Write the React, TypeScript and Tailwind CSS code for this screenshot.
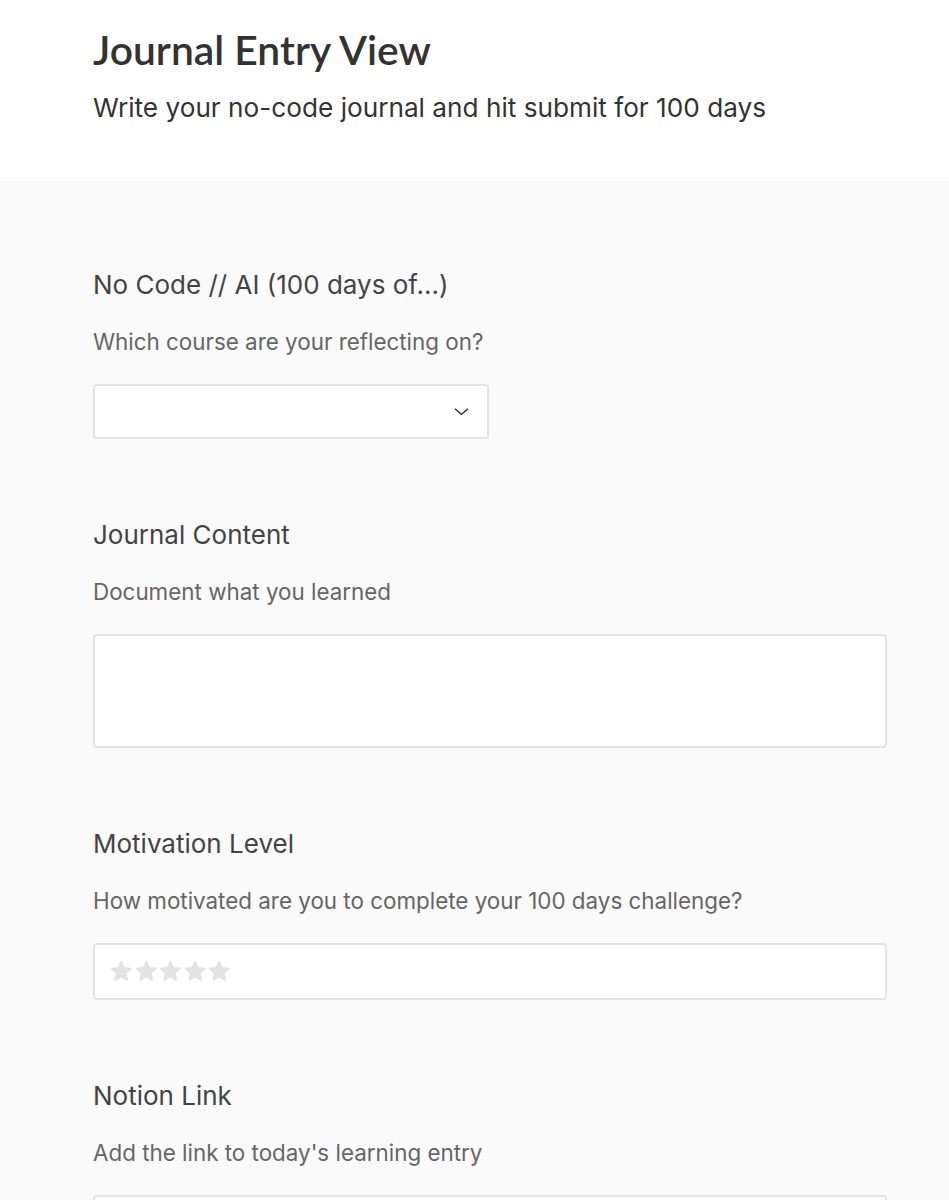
import React from "react";

const sans = { fontFamily: "Inter, 'Noto Sans', sans-serif" };

function Star() {
  return (
    <svg viewBox="0 0 24 24" className="w-[24.5px] h-[24.5px]" fill="#e3e3e3">
      <path d="M12 2.5l2.9 6.1 6.6.8-4.9 4.6 1.3 6.6L12 17.3l-5.9 3.3 1.3-6.6-4.9-4.6 6.6-.8z" strokeLinejoin="round" stroke="#e3e3e3" strokeWidth="1.5" />
    </svg>
  );
}

function Section({ label, help, children }: { label: string; help: string; children: React.ReactNode }) {
  return (
    <div className="flex flex-col">
      <div className="text-[26px] leading-[32px] text-[#444]">{label}</div>
      <div className="mt-[27px] text-[22.4px] leading-[28px] text-[#666]">{help}</div>
      <div className="mt-[28px]">{children}</div>
    </div>
  );
}

export default function App() {
  return (
    <div className="min-h-screen bg-[#fafafa]" style={sans}>
      {/* Header */}
      <header className="bg-white h-[177px] pl-[93px] pt-[26px]">
        <h1 className="text-[40.8px] leading-[48px] font-semibold text-[#333]" style={{ fontFamily: "Lato, sans-serif" }}>
          Journal Entry View
        </h1>
        <p className="mt-[18px] text-[26.2px] leading-[32px] text-[#333]">
          Write your no-code journal and hit submit for 100 days
        </p>
      </header>

      {/* Form */}
      <main className="pl-[93px] pr-[62px] pt-[92px] flex flex-col gap-[80px]">
        <Section label="No Code // AI (100 days of...)" help="Which course are your reflecting on?">
          <div className="w-[396px] h-[55px] bg-white border-[2.5px] border-[#e4e4e4] rounded-[4px] flex items-center justify-end pr-[18px]">
            <svg viewBox="0 0 16 9" className="w-[15px] h-[9px]" fill="none" stroke="#333" strokeWidth="1.5">
              <path d="M1 1.5l7 6 7-6" />
            </svg>
          </div>
        </Section>

        <Section label="Journal Content" help="Document what you learned">
          <div className="h-[114px] bg-white border-[2.5px] border-[#e4e4e4] rounded-[4px]" />
        </Section>

        <Section label="Motivation Level" help="How motivated are you to complete your 100 days challenge?">
          <div className="h-[57px] bg-white border-[2.5px] border-[#e4e4e4] rounded-[4px] flex items-center px-[14px]">
            <Star />
            <Star />
            <Star />
            <Star />
            <Star />
          </div>
        </Section>

        <Section label="Notion Link" help="Add the link to today's learning entry">
          <div className="h-[57px] bg-white border-[2.5px] border-[#e4e4e4] rounded-[4px]" />
        </Section>
      </main>
    </div>
  );
}
